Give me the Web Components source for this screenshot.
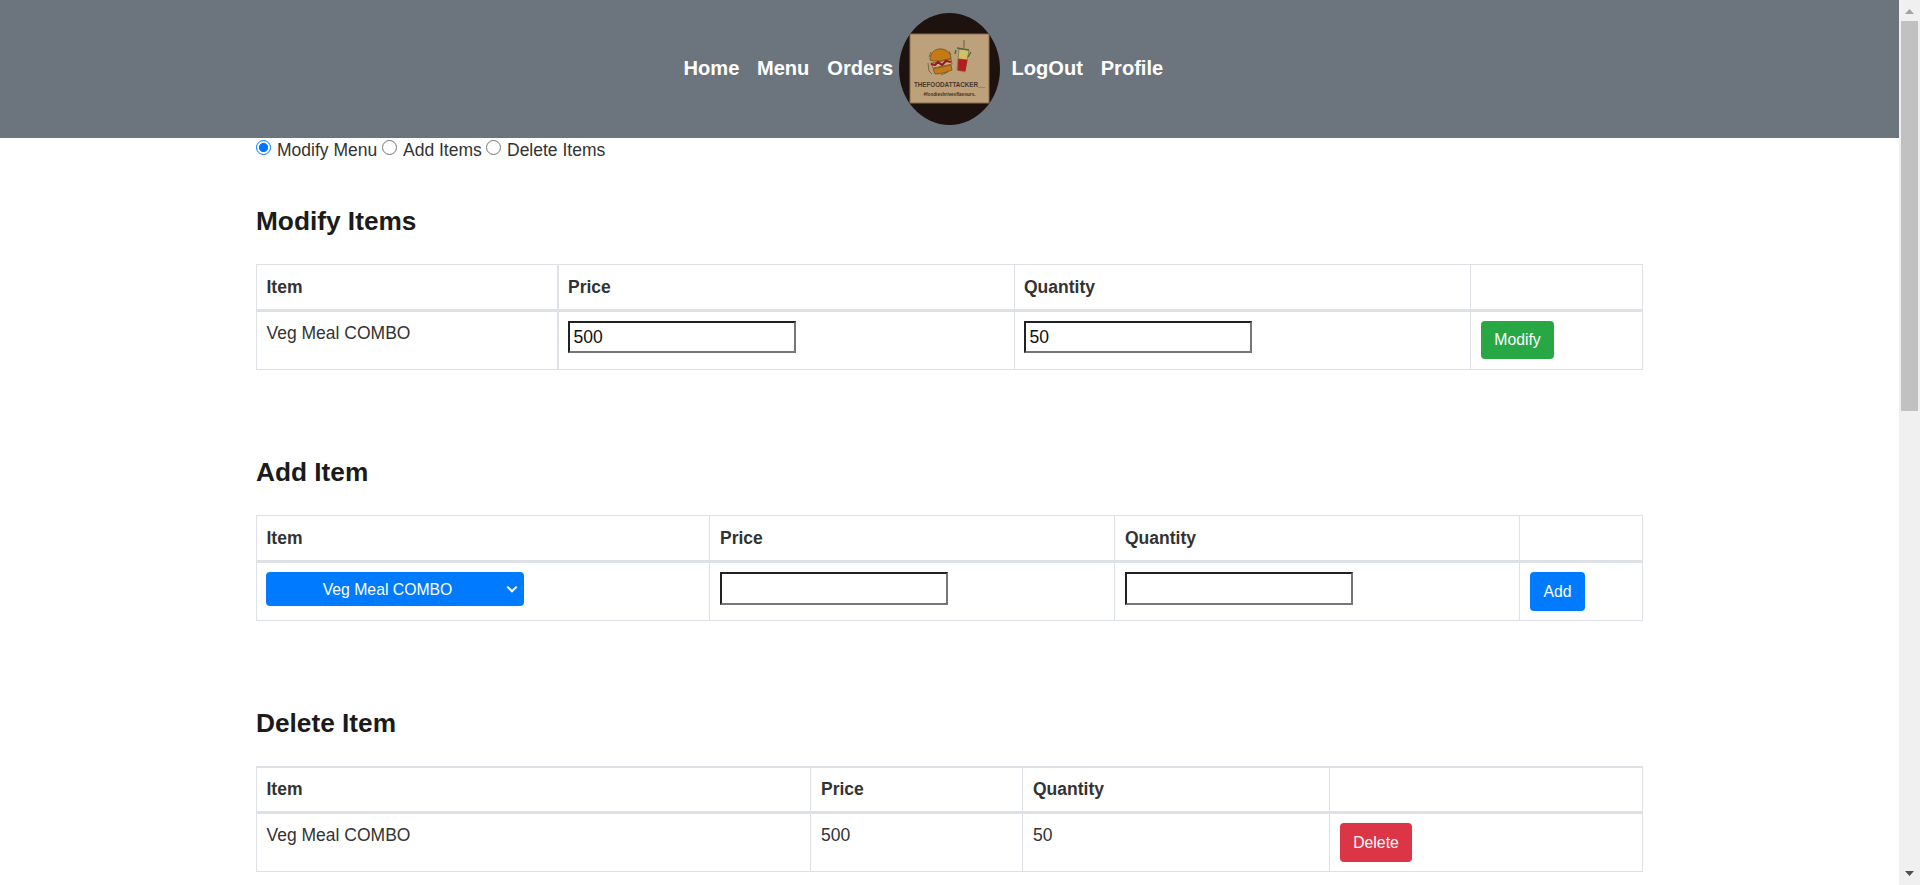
<!DOCTYPE html>
<html lang="en">
<head>
<meta charset="utf-8">
<title>Menu</title>
<style>
html,body{margin:0;height:100%;overflow:hidden;background:#fff;font-family:"Liberation Sans",Arial,sans-serif;color:#333}
body{display:flex}
.page{width:1899px;flex:none;overflow:hidden}
main{width:1387px;margin:0 auto}
</style>
</head>
<body>
<div class="page">
<site-nav></site-nav>
<main>
<mode-switch></mode-switch>
<item-section heading="Modify Items" style="--cols:301px 457px 456px 173px;--second:2px;--row:57px;--pt:10px">
  <span slot="a">Veg Meal COMBO</span><text-field slot="b" value="500"></text-field><text-field slot="c" value="50"></text-field><action-button slot="d" style="--w:73px;--c:#28a745">Modify</action-button>
</item-section>
<item-section heading="Add Item" style="--cols:453px 405px 405px 124px;--row:57px;--pt:10px">
  <item-select slot="a"></item-select><text-field slot="b" style="--h:33px"></text-field><text-field slot="c" style="--h:33px"></text-field><action-button slot="d" style="--w:55px;--h:39px;--c:#007bff">Add</action-button>
</item-section>
<item-section heading="Delete Item" style="--cols:554px 212px 307px 314px;--top:2px;--row:57px;--hr:43px">
  <span slot="a">Veg Meal COMBO</span><span slot="b">500</span><span slot="c">50</span><action-button slot="d" style="--w:72px;--h:39px;--c:#dc3545">Delete</action-button>
</item-section>
</main>
</div>
<page-scroll></page-scroll>
<script>
function define(name, html){
  customElements.define(name, class extends HTMLElement{
    constructor(){
      super();
      this.attachShadow({mode:'open'}).innerHTML = html;
    }
    connectedCallback(){
      const h = this.shadowRoot.querySelector('h3');
      if (h) h.textContent = this.getAttribute('heading');
      const i = this.shadowRoot.querySelector('input[type=text]');
      if (i && this.hasAttribute('value')) i.value = this.getAttribute('value');
    }
  });
}
define('food-logo', `
<style>:host{display:block;width:101px;height:112px}svg{display:block}text{font-family:"Liberation Sans",Arial,sans-serif;font-weight:bold}</style>
<svg width="101" height="112" viewBox="0 0 101 112">
<defs><clipPath id="e"><ellipse cx="50.5" cy="56" rx="50.5" ry="56"/></clipPath></defs>
<g clip-path="url(#e)">
<rect width="101" height="112" fill="#1d120e"/>
<rect x="11" y="21" width="79" height="69" fill="#bda17b" stroke="#8a6c4c" stroke-width="1"/>
<g stroke="#6b4a24" stroke-width=".7">
<path d="M31 47C31 39 37 35 43 36c6 1 9 5 9 10-7 0-13 4-21 1Z" fill="#c57a16"/>
<path d="M32 50c7 0 13-3 20-4l1 5-19 4Z" fill="#d9b27e"/>
<path d="m32 51 4 1 3-3 4 3 4-4 5 1" fill="none" stroke="#921d24" stroke-width="2.2"/>
<path d="m34 56 18-4 1 5c-5 2-11 4-17 4Z" fill="#c57a16"/>
<path d="M29 50l1 8 3 3M30 44l2-5M50 38l2 4M42 62l7-3" fill="none"/>
</g>
<g stroke="#69704a" stroke-width=".7">
<path d="m60 36 10 1-4 22-8-2Z" fill="#d2bf66"/>
<path d="m59.500 46 8.500 1-2 11-7-1Z" fill="#b51c20" stroke="#9c201c"/>
<path d="m58 35 12 2M57 37l-1 4M72 39l-3 5" fill="none" stroke="#54654a" stroke-width="1.400"/>
<path d="M65 27v8" stroke="#6f6a55" stroke-width="1.200"/>
</g>
<text x="15" y="73.500" font-size="6.300" textLength="71" lengthAdjust="spacingAndGlyphs" fill="#49382a">THEFOODATTACKER__</text>
<text x="24.500" y="82.500" font-size="5.500" textLength="52" lengthAdjust="spacingAndGlyphs" fill="#3f2f23">#foodieshrivesflavours.</text>
</g></svg>`);
define('site-nav', `
<style>:host{display:flex;height:138px;background:#6c757d;color:#fff;font-weight:bold;font-size:20.1px;align-items:center;padding-left:683.5px;box-sizing:border-box}
a{white-space:nowrap;line-height:24px;position:relative;top:-1px}
a:nth-of-type(1){width:73.4px}a:nth-of-type(2){width:70.4px}a:nth-of-type(3){width:71.7px}a:nth-of-type(4){width:89.2px;margin-left:11.5px}</style>
<a>Home</a><a>Menu</a><a>Orders</a><food-logo></food-logo><a>LogOut</a><a>Profile</a>`);
define('mode-switch', `
<style>:host{display:flex;height:23px;font-size:17.5px;line-height:25px}
label{display:flex;white-space:nowrap}
label:nth-of-type(1){width:126px}label:nth-of-type(2){width:104px}
input{appearance:none;box-sizing:border-box;width:15px;height:15px;margin:2px 6px 0 0;border:1px solid #767676;border-radius:50%;background:#fff}
input:checked{border:1.6px solid #0075ff;background:radial-gradient(circle,#0075ff 0 4.2px,#fff 4.9px)}</style>
<label><input type="radio" name="m" checked>Modify Menu</label><label><input type="radio" name="m">Add Items</label><label><input type="radio" name="m">Delete Items</label>`);
define('item-section', `
<style>:host{display:block;font-size:17.5px;line-height:25px;padding-bottom:82px}
h3{margin:0;font-size:26.25px;line-height:32px;color:#1b1b1b;height:59px;padding-top:4px;font-weight:bold}
:host([heading="Modify Items"]) h3{padding-top:44px}
.t{border:1px solid #dee2e6;border-left:0;border-top-width:var(--top,1px)}
.r{display:grid;grid-template-columns:var(--cols);margin-right:-1px}
.r>div{border-left:1px solid #dee2e6;padding:9px 0 0 10px;box-sizing:border-box}
.r>div:nth-child(2){border-left-width:var(--second,1px)}
:host([heading="Modify Items"]) .r>div:nth-child(2),:host([heading="Modify Items"]) .r>div:nth-child(3){padding-left:9px}
.r>div:first-child{padding-left:9.5px}
.r.h>div{padding-top:var(--pt,9px)}
.h{height:var(--hr,44px);border-bottom:3px solid #dee2e6;font-weight:bold}
.b{height:var(--row)}
</style>
<h3></h3>
<div class="t"><div class="r h"><div>Item</div><div>Price</div><div>Quantity</div><div></div></div>
<div class="r b"><div><slot name="a"></slot></div><div><slot name="b"></slot></div><div><slot name="c"></slot></div><div><slot name="d"></slot></div></div></div>`);
define('text-field', `
<style>:host{display:block;width:228px;height:var(--h,32px)}
input{display:block;box-sizing:border-box;width:100%;height:100%;border:2px solid;border-color:#212121 #767676 #767676 #212121;padding:0 3.5px;margin:0;font:17.5px "Liberation Sans",Arial,sans-serif;color:#111;background:#fff;outline:0}</style>
<input type="text">`);
define('item-select', `
<style>:host{display:grid;width:258px;height:34px;align-items:center;margin-left:-.5px}
select,svg{grid-area:1/1}
select{appearance:none;width:258px;height:34px;border:0;border-radius:4px;background:#007bff;color:#fff;font:15.75px "Liberation Sans",Arial,sans-serif;text-align:center;text-align-last:center;padding:0 15px 0 0;margin:0}
svg{justify-self:end;margin-right:6px;pointer-events:none}</style>
<select><option>Veg Meal COMBO</option></select>
<svg width="12" height="8" viewBox="0 0 12 8"><path d="M1.3 1.6 6 6.3l4.7-4.7" fill="none" stroke="#fff" stroke-width="2"/></svg>`);
define('action-button', `
<style>:host{display:block;width:var(--w);height:var(--h,38px)}
button{display:block;width:100%;height:100%;border:0;border-radius:4px;background:var(--c);color:#fff;padding:0;font:15.75px "Liberation Sans",Arial,sans-serif}</style>
<button><slot></slot></button>`);
define('page-scroll', `
<style>:host{display:flex;flex-direction:column;align-items:center;justify-content:space-between;width:21px;height:885px;background:#f0f0f0}
div{width:17px;height:390px;background:#c1c1c1}
.u,.d{height:21px;display:block}.s{flex:1}</style>
<svg class="u" width="21" height="21"><path d="M6 14h9l-4.5-5Z" fill="#a3a3a3"/></svg><div></div><span class="s"></span><svg class="d" width="21" height="21"><path d="M6 7h9l-4.500 5Z" fill="#505050"/></svg>`);
</script>
</body>
</html>
